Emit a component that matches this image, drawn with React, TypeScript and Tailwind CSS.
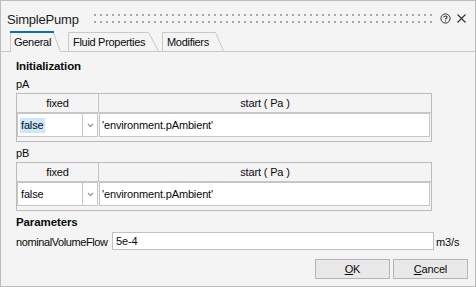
import React from 'react';

const borderGray = 'border-[#c6c6c6]';

const Chevron = () => (
    <svg width="7" height="5" viewBox="0 0 7 5">
        <path d="M1 1 L3.5 3.5 L6 1" fill="none" stroke="#9c9c9c" strokeWidth="1.4" />
    </svg>
);

const ParamTable = ({ highlight }: { highlight?: boolean }) => (
    <div className="mt-[2px] w-[416px] border border-[#bcbcbc]">
        <div className={`flex h-[19px] border-b ${borderGray}`}>
            <div className={`flex w-[82px] items-center justify-center border-r ${borderGray}`}>fixed</div>
            <div className="flex flex-1 items-center justify-center">start ( Pa )</div>
        </div>
        <div className="flex h-[24px] pr-[1px]">
            <div className={`flex w-[66px] items-center border ${borderGray} bg-white pl-[2px]`}>
                <span className={`px-[1px] leading-[15px] ${highlight ? 'bg-[#cce8ff]' : ''}`}>false</span>
            </div>
            <div className={`flex w-[15px] items-center justify-center border-y border-r ${borderGray} bg-white`}>
                <Chevron />
            </div>
            <div className={`ml-[1px] flex flex-1 items-center border ${borderGray} bg-white pl-[2px]`}>'environment.pAmbient'</div>
        </div>
        <div className="h-[4px]" />
    </div>
);

const App: React.FC = () => {
    return (
        <div className="flex h-[287px] w-[476px] flex-col border border-[#bdbdbd] bg-[#f4f4f4] font-['Liberation_Sans',Arial,sans-serif] text-[11px] tracking-[-0.15px] text-[#0a0a0a]">
            {/* title bar */}
            <div className="flex h-[30px] shrink-0 items-start pl-[6px] pr-[9px] pt-[11px]">
                <span className="text-[13px] leading-[16px] tracking-[-0.2px] text-[#1a1a1a]">SimplePump</span>
                <svg className="ml-[15px] mr-[7px] mt-[2px] h-[9px] flex-1">
                    <defs>
                        <pattern id="grip" width="6" height="7" patternUnits="userSpaceOnUse">
                            <rect x="0" y="0" width="2" height="2" fill="#a6a6a6" />
                        </pattern>
                    </defs>
                    <rect width="100%" height="9" fill="url(#grip)" />
                </svg>
                <svg className="mt-[1px]" width="11" height="11" viewBox="0 0 11 11">
                    <circle cx="5.5" cy="5.5" r="4.6" fill="none" stroke="#333" strokeWidth="1" />
                    <path d="M3.9 4.3 C3.9 2.6 7.1 2.6 7.1 4.3 C7.1 5.3 5.5 5.3 5.5 6.5" fill="none" stroke="#333" strokeWidth="1.1" />
                    <rect x="5" y="7.4" width="1.1" height="1.1" fill="#333" />
                </svg>
                <svg className="ml-[6px] mt-[2px]" width="9" height="9" viewBox="0 0 9 9">
                    <path d="M0.5 0.5 L8.5 8.5 M8.5 0.5 L0.5 8.5" stroke="#333" strokeWidth="1.1" />
                </svg>
            </div>

            {/* tabs */}
            <div className="flex h-[21px] shrink-0 items-end border-b border-[#c9c9c9] pl-[9px] tracking-[-0.3px]">
                <div className="relative -mb-px h-[21px] w-[51px] shrink-0 bg-[#f4f4f4] pl-[4px] pt-[5px] leading-[13px]">
                    <svg className="absolute left-0 top-0" width="51" height="21">
                        <path d="M0.5 21 V2" stroke="#c9c9c9" />
                        <rect x="0" y="0" width="44" height="2" fill="#0a6ebd" />
                        <path d="M43.5 2 L50.5 21" stroke="#c9c9c9" />
                    </svg>
                    <span className="relative">General</span>
                </div>
                <div className="relative ml-[7px] h-[19px] w-[91px] shrink-0 pl-[5px] pt-[4px] leading-[13px]">
                    <svg className="absolute left-0 top-0" width="91" height="19">
                        <path d="M0.5 19 V0.5 H80.5 L90.5 19" fill="none" stroke="#c9c9c9" />
                    </svg>
                    <span className="relative">Fluid Properties</span>
                </div>
                <div className="relative ml-[3px] h-[19px] w-[62px] shrink-0 pl-[5px] pt-[4px] leading-[13px]">
                    <svg className="absolute left-0 top-0" width="62" height="19">
                        <path d="M0.5 19 V0.5 H53.5 L61.5 19" fill="none" stroke="#c9c9c9" />
                    </svg>
                    <span className="relative">Modifiers</span>
                </div>
            </div>

            {/* panel */}
            <div className="flex flex-1 flex-col pl-[15px] pr-[7px] pt-[7px] leading-[13px]">
                <div className="text-[11.5px] font-bold leading-[14px] tracking-[-0.1px]">Initialization</div>
                <div className="mt-[5px]">pA</div>
                <ParamTable highlight />
                <div className="mt-[5px]">pB</div>
                <ParamTable />
                <div className="mt-[4px] text-[11.5px] font-bold leading-[14px] tracking-[-0.1px]">Parameters</div>
                <div className="mt-[3px] flex h-[18px] items-center">
                    <span className="w-[96px] whitespace-nowrap pt-[2px] tracking-[-0.4px]">nominalVolumeFlow</span>
                    <div className="flex h-[18px] w-[322px] items-center border border-[#c0c0c0] bg-white pl-[3px]">5e-4</div>
                    <span className="ml-[2px] pt-[2px]">m3/s</span>
                </div>
                <div className="mt-[9px] flex justify-end gap-[3px]">
                    <button className="flex h-[20px] w-[75px] items-center justify-center border border-[#b4b4b4] bg-[#e9e9e9]">
                        <span><span className="underline">O</span>K</span>
                    </button>
                    <button className="flex h-[20px] w-[75px] items-center justify-center border border-[#b4b4b4] bg-[#e9e9e9]">
                        <span><span className="underline">C</span>ancel</span>
                    </button>
                </div>
            </div>
        </div>
    );
};

export default App;
